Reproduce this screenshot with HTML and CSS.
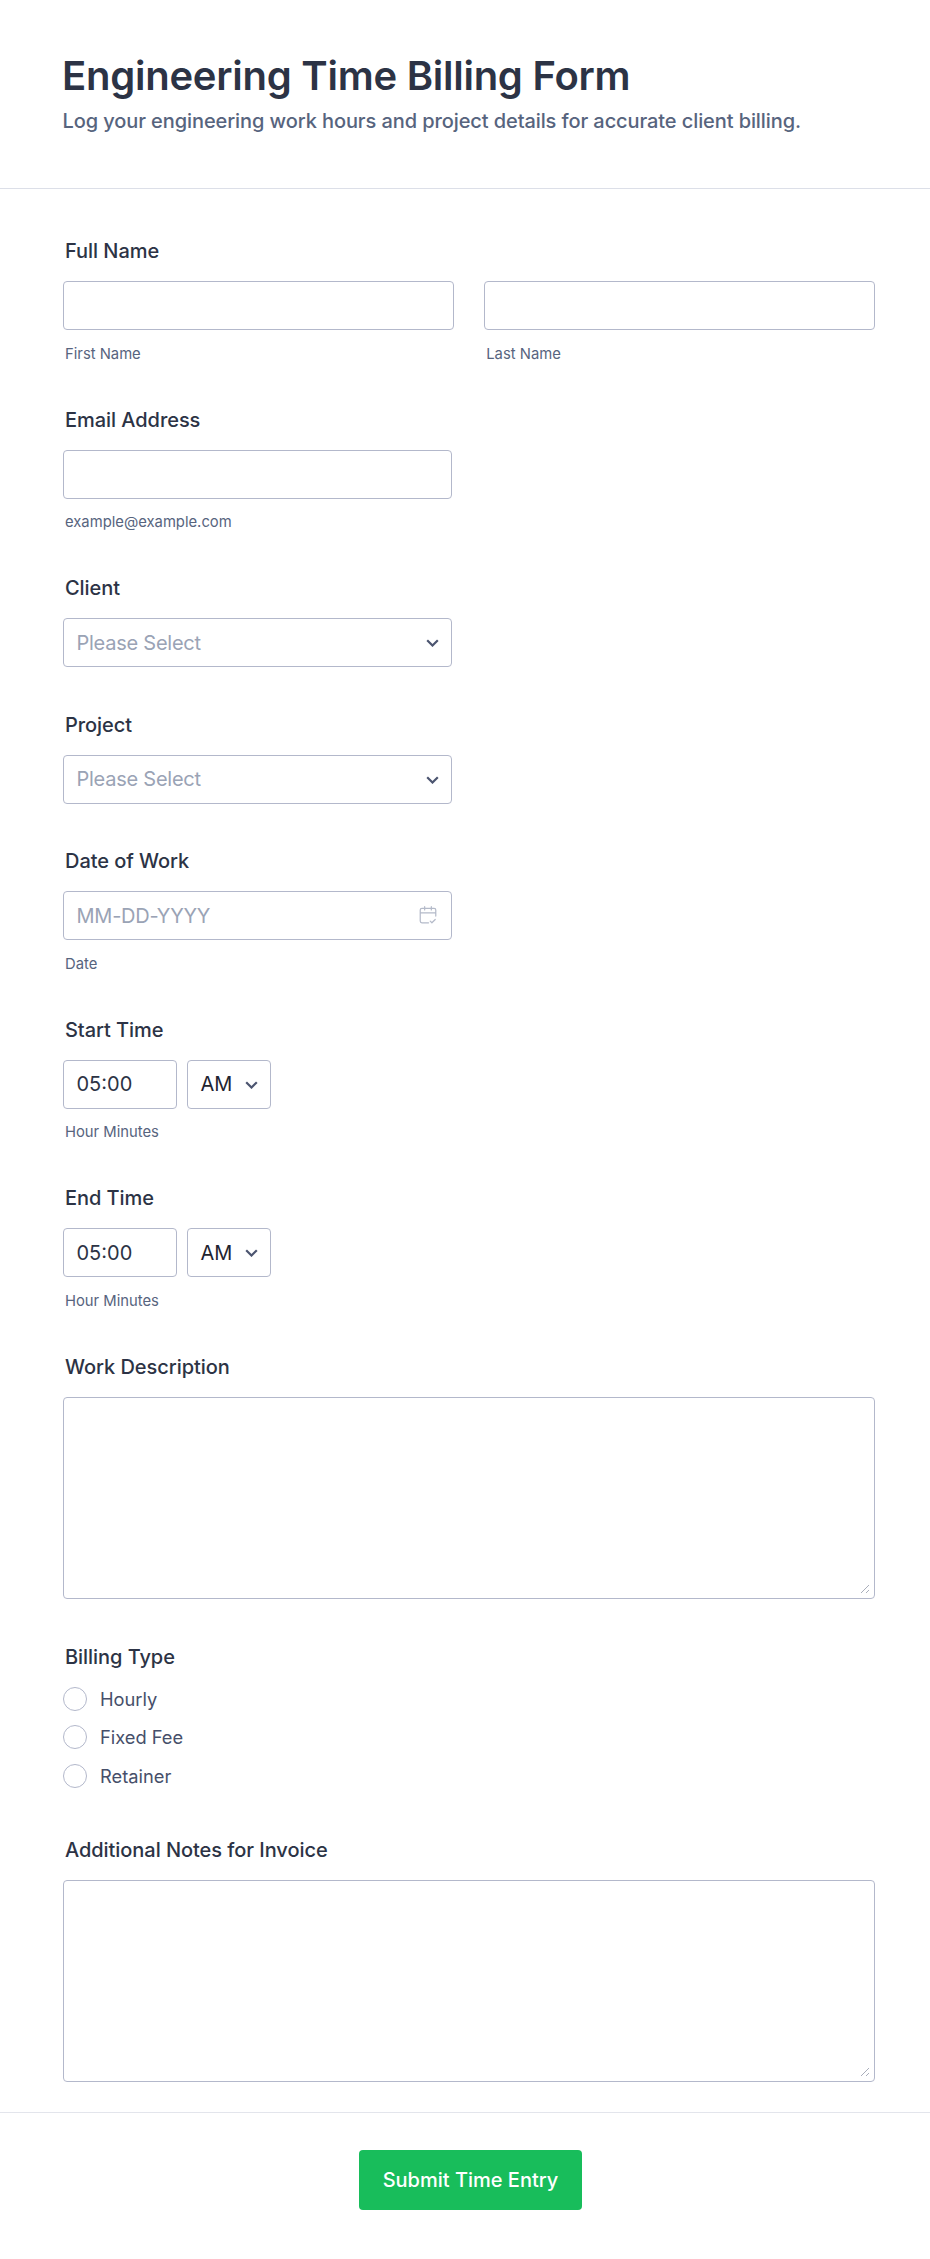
FILE: index.html
```html
<!DOCTYPE html>
<html lang="en">
<head>
<meta charset="utf-8">
<title>Engineering Time Billing Form</title>
<link rel="stylesheet" href="styles.css">
</head>
<body>
<form class="form">
  <header class="header">
    <h1 class="title">Engineering Time Billing Form</h1>
    <p class="subtitle">Log your engineering work hours and project details for accurate client billing.</p>
  </header>
  <div class="fields">
    <div class="field">
      <div class="label">Full Name</div>
      <div class="name-row">
        <div class="name-col"><div class="box"></div><div class="sub">First Name</div></div>
        <div class="name-col"><div class="box"></div><div class="sub">Last Name</div></div>
      </div>
    </div>
    <div class="field">
      <div class="label">Email Address</div>
      <div class="box box-half"></div>
      <div class="sub">example@example.com</div>
    </div>
    <div class="field field-plain">
      <div class="label">Client</div>
      <div class="box box-half box-text placeholder">Please Select
        <svg class="chev" viewBox="0 0 13 8" width="13" height="8"><path d="M1.200 1.200 6.500 6.500l5.300-5.300" fill="none" stroke="#4c5570" stroke-width="2.200"/></svg>
      </div>
    </div>
    <div class="field field-plain">
      <div class="label">Project</div>
      <div class="box box-half box-text placeholder">Please Select
        <svg class="chev" viewBox="0 0 13 8" width="13" height="8"><path d="M1.200 1.200 6.500 6.500l5.300-5.300" fill="none" stroke="#4c5570" stroke-width="2.200"/></svg>
      </div>
    </div>
    <div class="field">
      <div class="label">Date of Work</div>
      <div class="box box-half box-text placeholder">MM-DD-YYYY
        <svg class="cal" viewBox="0 0 18 18" width="20" height="20" fill="none" stroke="#b4bac9" stroke-width="1.100" stroke-linecap="round" stroke-linejoin="round"><path d="M9.500 16H3.500A1.500 1.500 0 0 1 2 14.500V4.500A1.500 1.500 0 0 1 3.500 3h11A1.500 1.500 0 0 1 16 4.500V10M2 7h14M6 1.500v3M12 1.500v3M11 14.500l1.500 1.500 3-3"/></svg>
      </div>
      <div class="sub">Date</div>
    </div>
    <div class="field">
      <div class="label">Start Time</div>
      <div class="time-row">
        <div class="box box-time box-text">05:00</div>
        <div class="box box-ampm box-text">AM
          <svg class="chev" viewBox="0 0 13 8" width="13" height="8"><path d="M1.200 1.200 6.500 6.500l5.300-5.300" fill="none" stroke="#4c5570" stroke-width="2.200"/></svg>
        </div>
      </div>
      <div class="sub">Hour Minutes</div>
    </div>
    <div class="field">
      <div class="label">End Time</div>
      <div class="time-row">
        <div class="box box-time box-text">05:00</div>
        <div class="box box-ampm box-text">AM
          <svg class="chev" viewBox="0 0 13 8" width="13" height="8"><path d="M1.200 1.200 6.500 6.500l5.300-5.300" fill="none" stroke="#4c5570" stroke-width="2.200"/></svg>
        </div>
      </div>
      <div class="sub">Hour Minutes</div>
    </div>
    <div class="field field-area">
      <div class="label">Work Description</div>
      <div class="box box-area">
        <svg class="grip" viewBox="0 0 10 10" width="10" height="10" fill="none" stroke="#a9aebb" stroke-width="1"><path d="M1 9 9 1M6 9l3-3"/></svg>
      </div>
    </div>
    <div class="field field-radios">
      <div class="label">Billing Type</div>
      <div class="radios">
        <div class="radio"><span class="dot"></span>Hourly</div>
        <div class="radio"><span class="dot"></span>Fixed Fee</div>
        <div class="radio"><span class="dot"></span>Retainer</div>
      </div>
    </div>
    <div class="field field-last">
      <div class="label">Additional Notes for Invoice</div>
      <div class="box box-area">
        <svg class="grip" viewBox="0 0 10 10" width="10" height="10" fill="none" stroke="#a9aebb" stroke-width="1"><path d="M1 9 9 1M6 9l3-3"/></svg>
      </div>
    </div>
  </div>
  <footer class="footer">
    <button class="submit" type="button">Submit Time Entry</button>
  </footer>
</form>
</body>
</html>
```
FILE: styles.css
```css
* { box-sizing: border-box; }
html, body { margin: 0; background: #fff; }
body { font-family: Inter, "Liberation Sans", sans-serif; color: #2c3345; }
.form { width: 930px; min-height: 2259px; }
.header { height: 189px; padding: 52px 62px 0; border-bottom: 1px solid #dcdfe8; }
.title { margin: 0; font-size: 40px; line-height: 48px; font-weight: 600; letter-spacing: -0.25px; color: #2c3345; }
.subtitle { margin: 8px 0 0; padding-left: 0.5px; font-size: 20px; line-height: 26px; font-weight: 500; letter-spacing: -0.09px; color: #57647e; }
.fields { padding: 49px 55px 0 63px; }
.field { margin-bottom: 44px; }
.field-plain { margin-bottom: 44.5px; }
.field-area { margin-bottom: 45.5px; }
.field-radios { margin-bottom: 49px; }
.field-last { margin-bottom: 30px; }
.label { padding: 1px 0 0 2px; font-size: 20px; line-height: 24px; font-weight: 500; letter-spacing: -0.05px; color: #2c3345; margin-bottom: 18px; }
.name-row { display: flex; gap: 30.5px; }
.name-col { flex: 1; }
.box { position: relative; height: 49px; width: 100%; border: 1px solid #b3b8cb; border-radius: 4px; background: #fff; }
.box-half { width: 389px; }
.box-text { display: flex; align-items: center; padding-left: 12.5px; font-size: 20px; color: #2c3345; }
.placeholder { color: #9aa3b5; letter-spacing: -0.25px; }
.sub { padding-left: 2px; margin-top: 14.5px; font-size: 14.8px; line-height: 18px; color: #57647e; }
.chev { position: absolute; right: 12px; top: 20px; }
.cal { position: absolute; right: 13px; top: 13px; }
.time-row { display: flex; gap: 10px; }
.box-time { width: 114px; }
.box-ampm { width: 84px; color: #1f2430; }
.box-area { height: 202px; }
.grip { position: absolute; right: 4px; bottom: 4px; }
.radios { display: flex; flex-direction: column; gap: 14.3px; }
.radio { display: flex; align-items: center; gap: 13px; height: 24px; font-size: 18.3px; color: #464f6a; }
.dot { width: 24px; height: 24px; border-radius: 50%; border: 1px solid #b3b8cb; }
.footer { border-top: 1px solid #e3e5ec; padding: 37px 55px 0 66px; display: flex; justify-content: center; }
.submit { width: 223px; height: 60px; padding-top: 2px; border: 0; border-radius: 4px; background: #18bd5b; color: #fff; font-family: Inter, sans-serif; font-size: 20px; font-weight: 500; }
```
